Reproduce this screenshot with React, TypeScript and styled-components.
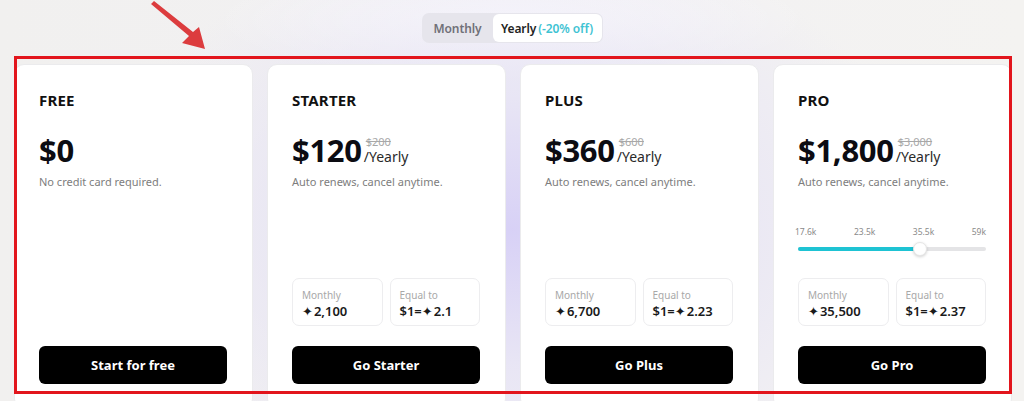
import React from "react";
import styled, { createGlobalStyle } from "styled-components";

const GlobalStyle = createGlobalStyle`
  html, body { margin: 0; padding: 0; }
  body {
    width: 1024px;
    height: 401px;
    overflow: hidden;
    font-family: "Noto Sans", "Open Sans", Arial, sans-serif;
    color: #111;
  }
  * { box-sizing: border-box; }
`;

const Page = styled.div`
  position: relative;
  width: 1024px;
  height: 401px;
  overflow: hidden;
  padding-top: 13px;
  background:
    radial-gradient(ellipse 420px 300px at 512px 230px, rgba(214, 207, 246, 0.95) 0%, rgba(226, 222, 246, 0.6) 45%, rgba(240, 238, 244, 0) 100%),
    radial-gradient(ellipse 300px 60px at 512px 20px, rgba(255, 255, 255, 0.8) 0%, rgba(255, 255, 255, 0) 100%),
    linear-gradient(90deg, #f1f0ef 0%, #f2f1f3 50%, #f4f3f1 100%);
`;

const ToggleWrap = styled.div`
  display: flex;
  justify-content: center;
`;

const Toggle = styled.div`
  display: flex;
  height: 30px;
  padding: 1px;
  border-radius: 7px;
  background: #e6e5ec;
`;

const Segment = styled.div<{ $active?: boolean }>`
  display: flex;
  align-items: center;
  justify-content: center;
  width: ${(p) => (p.$active ? "109px" : "70px")};
  border-radius: 6px;
  font-size: 12px;
  font-weight: 600;
  letter-spacing: -0.1px;
  color: ${(p) => (p.$active ? "#222" : "#707078")};
  background: ${(p) => (p.$active ? "#fff" : "transparent")};
  white-space: pre;
`;

const Discount = styled.span`
  color: #3fc3d3;
  margin-left: 2px;
`;

const Cards = styled.div`
  display: grid;
  grid-template-columns: repeat(4, 239px);
  column-gap: 14px;
  margin-top: 21px;
  padding-left: 14px;
`;

const Card = styled.div`
  display: flex;
  flex-direction: column;
  height: 345px;
  padding: 25px 25px 24px 24px;
  background: #fff;
  border: 1px solid #ebebed;
  border-radius: 10px;
`;

const Title = styled.div`
  font-size: 15px;
  font-weight: 700;
  line-height: 20px;
  letter-spacing: 0.2px;
  color: #111;
`;

const PriceRow = styled.div`
  display: flex;
  align-items: flex-end;
  margin-top: 22px;
`;

const Price = styled.div`
  font-size: 31px;
  font-weight: 700;
  line-height: 36px;
  color: #0c0c12;
  letter-spacing: -0.3px;
`;

const PriceSide = styled.div`
  display: flex;
  flex-direction: column;
  margin-left: 4px;
  margin-bottom: 3px;
`;

const Strike = styled.span`
  font-size: 11px;
  line-height: 13px;
  color: #a8a8a8;
  text-decoration: line-through;
`;

const Period = styled.span`
  font-size: 14px;
  line-height: 17px;
  color: #2a2a2a;
  margin-left: -2px;
`;

const Sub = styled.div`
  margin-top: 6px;
  font-size: 11px;
  line-height: 15px;
  color: #7d7d7d;
`;

const Slider = styled.div`
  margin-top: 37px;
`;

const SliderLabels = styled.div`
  display: flex;
  justify-content: space-between;
  font-size: 8.5px;
  line-height: 11px;
  color: #8a8a8a;
  margin-left: -3px;
`;

const Track = styled.div`
  position: relative;
  height: 4px;
  margin-top: 10px;
  border-radius: 2px;
  background: #e4e4e6;
`;

const Fill = styled.div`
  height: 100%;
  border-radius: 2px;
  background: #1ec3d3;
`;

const Thumb = styled.div`
  position: absolute;
  top: 50%;
  width: 14px;
  height: 14px;
  margin-left: -7px;
  margin-top: -7px;
  border-radius: 50%;
  background: #fff;
  border: 1px solid #e6e6e6;
  box-shadow: 0 1px 3px rgba(0, 0, 0, 0.18);
`;

const Bottom = styled.div`
  margin-top: auto;
  display: flex;
  flex-direction: column;
`;

const Stats = styled.div`
  display: grid;
  grid-template-columns: 1fr 1fr;
  column-gap: 7px;
  margin-bottom: 20px;
`;

const Stat = styled.div`
  height: 48px;
  padding: 10px 9px 0;
  border: 1px solid #ededef;
  border-radius: 7px;
`;

const StatLabel = styled.div`
  font-size: 10px;
  line-height: 13px;
  color: #a8a8a8;
`;

const StatValue = styled.div`
  margin-top: 1px;
  font-size: 13px;
  line-height: 17px;
  font-weight: 600;
  color: #1a1a1a;
`;

const Star = styled.span`
  font-family: "DejaVu Sans", sans-serif;
  font-size: 13px;
  margin-right: 1px;
`;

const Button = styled.button`
  height: 38px;
  width: 100%;
  border: none;
  border-radius: 6px;
  background: #000;
  color: #fff;
  font-family: inherit;
  font-size: 13px;
  font-weight: 700;
  cursor: pointer;
`;

const Annotation = styled.div`
  position: absolute;
  left: 14px;
  top: 56px;
  width: 998px;
  height: 338px;
  border: 3px solid #e2151c;
  pointer-events: none;
`;

const Arrow = styled.svg`
  position: absolute;
  left: 0;
  top: 0;
  pointer-events: none;
`;

type Plan = {
  name: string;
  price: string;
  old?: string;
  sub: string;
  monthly?: string;
  equal?: string;
  button: string;
  slider?: boolean;
};

const plans: Plan[] = [
  { name: "FREE", price: "$0", sub: "No credit card required.", button: "Start for free" },
  { name: "STARTER", price: "$120", old: "$200", sub: "Auto renews, cancel anytime.", monthly: "2,100", equal: "2.1", button: "Go Starter" },
  { name: "PLUS", price: "$360", old: "$600", sub: "Auto renews, cancel anytime.", monthly: "6,700", equal: "2.23", button: "Go Plus" },
  { name: "PRO", price: "$1,800", old: "$3,000", sub: "Auto renews, cancel anytime.", monthly: "35,500", equal: "2.37", button: "Go Pro", slider: true },
];

const sliderValue = 65;

export default function App() {
  return (
    <>
      <GlobalStyle />
      <Page>
        <ToggleWrap>
          <Toggle>
            <Segment>Monthly</Segment>
            <Segment $active>
              Yearly<Discount>(-20% off)</Discount>
            </Segment>
          </Toggle>
        </ToggleWrap>
        <Cards>
          {plans.map((p) => (
            <Card key={p.name}>
              <Title>{p.name}</Title>
              <PriceRow>
                <Price>{p.price}</Price>
                {p.old && (
                  <PriceSide>
                    <Strike>{p.old}</Strike>
                    <Period>/Yearly</Period>
                  </PriceSide>
                )}
              </PriceRow>
              <Sub>{p.sub}</Sub>
              {p.slider && (
                <Slider>
                  <SliderLabels>
                    <span>17.6k</span>
                    <span>23.5k</span>
                    <span>35.5k</span>
                    <span>59k</span>
                  </SliderLabels>
                  <Track>
                    <Fill style={{ width: `${sliderValue}%` }} />
                    <Thumb style={{ left: `${sliderValue}%` }} />
                  </Track>
                </Slider>
              )}
              <Bottom>
                {p.monthly && (
                  <Stats>
                    <Stat>
                      <StatLabel>Monthly</StatLabel>
                      <StatValue>
                        <Star>✦</Star>
                        {p.monthly}
                      </StatValue>
                    </Stat>
                    <Stat>
                      <StatLabel>Equal to</StatLabel>
                      <StatValue>
                        $1=<Star>✦</Star>
                        {p.equal}
                      </StatValue>
                    </Stat>
                  </Stats>
                )}
                <Button>{p.button}</Button>
              </Bottom>
            </Card>
          ))}
        </Cards>
        <Annotation />
        <Arrow width="220" height="60" viewBox="0 0 220 60">
          <polygon
            points="151,4 189,36 182,43 205,49 199,27 193,32 154,1"
            fill="#dc3c3e"
          />
        </Arrow>
      </Page>
    </>
  );
}
